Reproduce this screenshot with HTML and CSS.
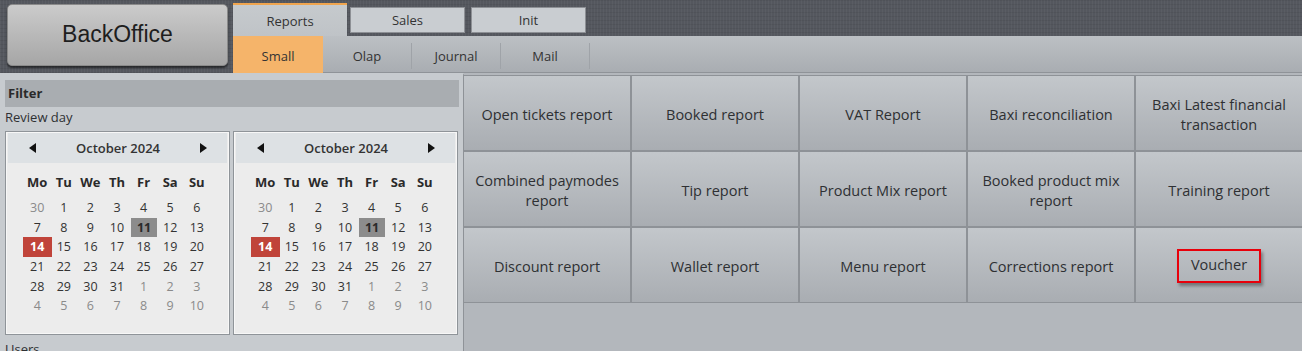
FILE: index.html
```html
<!DOCTYPE html>
<html lang="en">
<head>
	<meta charset="UTF-8">
	<title>BackOffice</title>
	<link rel="stylesheet" href="styles.css">
</head>
<body>
	<div class="app">
		<header class="top">
			<div class="brand">
				<div class="brand-btn">BackOffice</div>
			</div>
			<div class="tabs">
				<div class="tab-row">
					<div class="tab active">Reports</div>
					<div class="tab">Sales</div>
					<div class="tab">Init</div>
				</div>
				<div class="sub-row">
					<div class="sub active">Small</div>
					<div class="sub">Olap</div>
					<div class="sub">Journal</div>
					<div class="sub">Mail</div>
				</div>
			</div>
		</header>

		<div class="content">
			<aside class="filter">
				<div class="filter-title">Filter</div>
				<div class="label">Review day</div>
				<div class="cals">
					<div class="cal">
						<div class="cal-head">
							<span class="arrow left"></span>
							<span class="month">October 2024</span>
							<span class="arrow right"></span>
						</div>
						<div class="days">
							<span class="wd">Mo</span><span class="wd">Tu</span><span class="wd">We</span><span class="wd">Th</span><span class="wd">Fr</span><span class="wd">Sa</span><span class="wd">Su</span>
							<span class="o">30</span><span>1</span><span>2</span><span>3</span><span>4</span><span>5</span><span>6</span>
							<span>7</span><span>8</span><span>9</span><span>10</span><span class="sel">11</span><span>12</span><span>13</span>
							<span class="today">14</span><span>15</span><span>16</span><span>17</span><span>18</span><span>19</span><span>20</span>
							<span>21</span><span>22</span><span>23</span><span>24</span><span>25</span><span>26</span><span>27</span>
							<span>28</span><span>29</span><span>30</span><span>31</span><span class="o">1</span><span class="o">2</span><span class="o">3</span>
							<span class="o">4</span><span class="o">5</span><span class="o">6</span><span class="o">7</span><span class="o">8</span><span class="o">9</span><span class="o">10</span>
						</div>
					</div>
					<div class="cal">
						<div class="cal-head">
							<span class="arrow left"></span>
							<span class="month">October 2024</span>
							<span class="arrow right"></span>
						</div>
						<div class="days">
							<span class="wd">Mo</span><span class="wd">Tu</span><span class="wd">We</span><span class="wd">Th</span><span class="wd">Fr</span><span class="wd">Sa</span><span class="wd">Su</span>
							<span class="o">30</span><span>1</span><span>2</span><span>3</span><span>4</span><span>5</span><span>6</span>
							<span>7</span><span>8</span><span>9</span><span>10</span><span class="sel">11</span><span>12</span><span>13</span>
							<span class="today">14</span><span>15</span><span>16</span><span>17</span><span>18</span><span>19</span><span>20</span>
							<span>21</span><span>22</span><span>23</span><span>24</span><span>25</span><span>26</span><span>27</span>
							<span>28</span><span>29</span><span>30</span><span>31</span><span class="o">1</span><span class="o">2</span><span class="o">3</span>
							<span class="o">4</span><span class="o">5</span><span class="o">6</span><span class="o">7</span><span class="o">8</span><span class="o">9</span><span class="o">10</span>
						</div>
					</div>
				</div>
				<div class="label">Users</div>
			</aside>

			<main class="reports">
				<div class="report">Open tickets report</div>
				<div class="report">Booked report</div>
				<div class="report">VAT Report</div>
				<div class="report">Baxi reconciliation</div>
				<div class="report">Baxi Latest financial transaction</div>
				<div class="report">Combined paymodes report</div>
				<div class="report">Tip report</div>
				<div class="report">Product Mix report</div>
				<div class="report">Booked product mix report</div>
				<div class="report">Training report</div>
				<div class="report">Discount report</div>
				<div class="report">Wallet report</div>
				<div class="report">Menu report</div>
				<div class="report">Corrections report</div>
				<div class="report"><span class="mark">Voucher</span></div>
			</main>
		</div>
	</div>
</body>
</html>
```

FILE: styles.css
```css
*{padding: 0;margin: 0;}
*,*:after,*:before{box-sizing:border-box;}
html,body{height: 100%;width: 100%;overflow: hidden;}
body{
	font-family: "Open Sans", "Noto Sans", sans-serif;
	font-size: 13px;
	color: #2e3033;
	background: #b3b7bc;
}
.app{width: 100%;height: 100%;display: flex;flex-direction: column;}

/* top bar */
.top{
	display: flex;
	height: 73px;
	background-color: #54575e;
	background-image:
		repeating-linear-gradient(90deg, rgba(255,255,255,.035) 0 1px, transparent 1px 3px),
		repeating-linear-gradient(0deg, rgba(0,0,0,.06) 0 1px, transparent 1px 4px);
}
.brand{width: 233px;padding: 4px 5px 6px 7px;}
.brand-btn{
	height: 62px;
	width: 221px;
	border-radius: 5px;
	background: linear-gradient(#cbcbcb, #a6a6a6);
	border: 1px solid #8a8a8a;
	box-shadow: 0 2px 2px rgba(0,0,0,.55);
	display: flex;
	align-items: center;
	justify-content: center;
	padding-bottom: 2px;
	font-family: "Liberation Sans", Arial, sans-serif;
	font-size: 23px;
	color: #1e1e1e;
}
.tabs{flex: 1;display: flex;flex-direction: column;}
.tab-row{height: 36px;display: flex;align-items: flex-end;}
.tab{
	width: 115px;
	height: 26px;
	margin: 0 3px 3px 3px;
	background: #c9cdd1;
	border: 1px solid #8d9095;
	display: flex;
	align-items: center;
	justify-content: center;
	font-size: 13px;
	color: #333;
}
.tab.active{
	width: 114px;
	height: 33px;
	margin: 0;
	border: 0;
	border-top: 2px solid #f0a54e;
	background: linear-gradient(#c6cacd, #bfc3c7);
}
.sub-row{
	height: 37px;
	display: flex;
	background: linear-gradient(#bcc0c4, #a9adb2);
	border-bottom: 1px solid #8f9398;
}
.sub{
	width: 89px;
	display: flex;
	align-items: center;
	justify-content: center;
	border-right: 1px solid #9fa3a8;
	margin: 7px 0 3px;
	font-size: 13px;
	color: #333;
}
.sub.active{
	width: 90px;
	margin: 0;
	margin-bottom: -1px;
	padding-top: 3px;
	border-right: 0;
	background: #f5b46a;
}

/* content */
.content{flex: 1;display: flex;min-height: 0;}
.filter{
	width: 464px;
	padding: 5px 5px 0 5px;
	background: #c7cbcf;
	border-right: 1px solid #8f9398;
	border-top: 2px solid #c7cbcf;
}
.filter-title{
	height: 27px;
	width: 454px;
	background: #a9adb1;
	padding: 4px 3px 0;
	font-weight: bold;
	font-size: 13px;
	color: #2a2a2a;
}
.label{font-size: 13px;height: 20px;line-height: 20px;color: #2e3033;}
.cals{display: flex;gap: 3px;margin-top: 4px;margin-bottom: 4px;}
.cal{
	width: 225px;
	height: 204px;
	background: #ececec;
	border: 1px solid #8f9499;
	box-shadow: inset 0 0 0 1px #f7f7f7;
	padding: 1px 2px 0;
}
.cal-head{
	height: 30px;
	background: #dde1e4;
	display: flex;
	align-items: center;
	justify-content: space-between;
	padding: 0 20px 0 21px;
}
.month{font-weight: 600;font-size: 13px;color: #333;}
.arrow{width: 0;height: 0;border-top: 5px solid transparent;border-bottom: 5px solid transparent;}
.arrow.left{border-right: 7px solid #111;}
.arrow.right{border-left: 7px solid #111;}
.days{
	display: grid;
	grid-template-columns: repeat(7, 26.6px);
	grid-template-rows: 26px repeat(6, 19.6px);
	justify-content: center;
	margin-top: 9px;
	margin-left: -1px;
	font-size: 12.5px;
	color: #333;
}
.days span{display: flex;align-items: center;justify-content: center;}
.days .wd{font-weight: bold;font-size: 13px;color: #2a2a2a;align-items: flex-start;line-height: 20px;}
.days .o{color: #8a8a8a;}
.days .sel{background: #8c8c8c;font-weight: bold;color: #2a2a2a;margin: 0 0 0 1px;}
.days .today{background: #c0443a;color: #fff;font-weight: bold;margin: 0 -1px 0 -1px;}

/* reports grid */
.reports{
	flex: 1;
	display: grid;
	grid-template-columns: repeat(5, 1fr);
	grid-template-rows: repeat(3, 74px);
	align-content: start;
	gap: 2px;
	padding: 3px 0 0 0;
	background: #b3b7bc;
}
.report{
	background: linear-gradient(#c3c7cb, #a9adb2);
	box-shadow: 0 0 0 1px #8e9297;
	display: flex;
	align-items: center;
	justify-content: center;
	text-align: center;
	padding: 3px 6px 0;
	font-size: 14.5px;
	line-height: 20px;
	color: #2e3033;
}
.mark{
	border: 2px solid #e8000b;
	padding: 4px 0 0;
	width: 84px;
	height: 34px;
	margin-top: -2px;
	box-shadow: 2px 3px 3px rgba(0,0,0,.35);
}
```
